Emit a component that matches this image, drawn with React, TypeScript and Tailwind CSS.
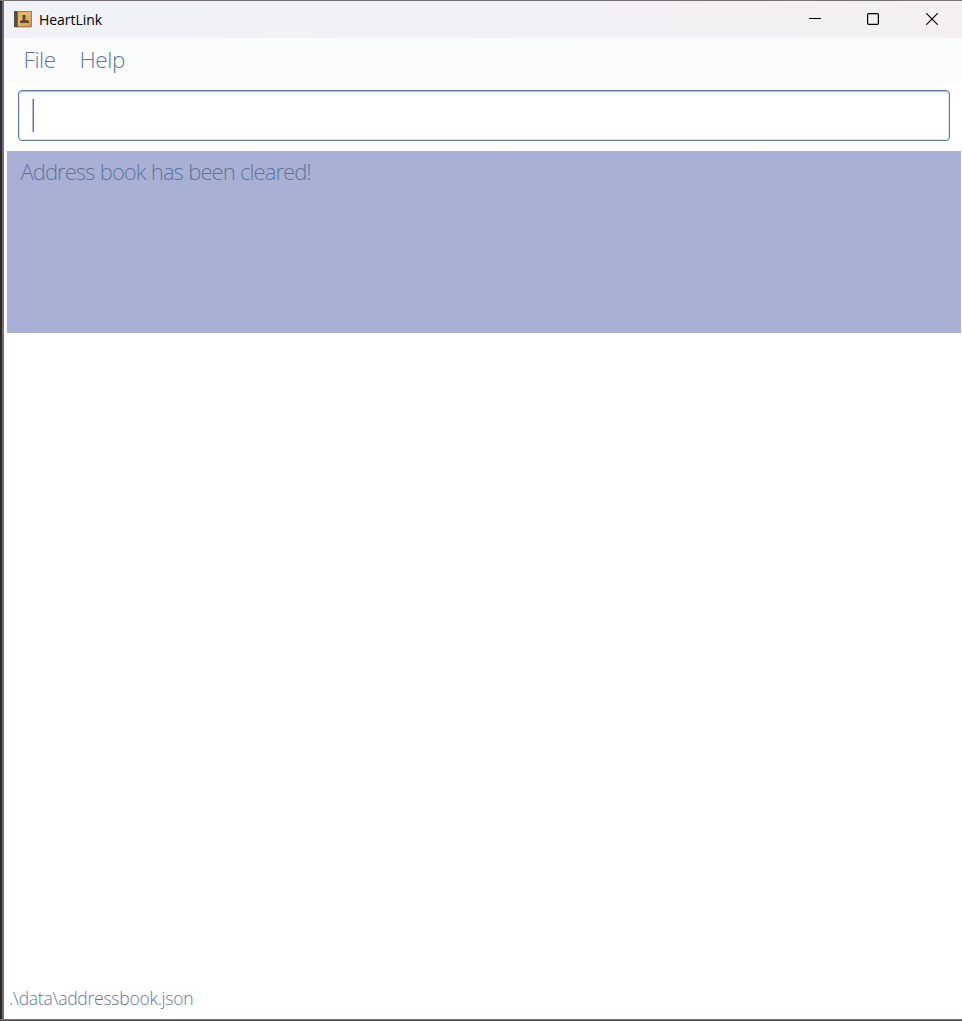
import React from "react";

function BookIcon() {
  return (
    <svg width="20" height="20" viewBox="0 0 20 20" className="shrink-0">
      <defs>
        <linearGradient id="cover" x1="0" y1="0" x2="1" y2="1">
          <stop offset="0" stopColor="#dba95a" />
          <stop offset=".4" stopColor="#e5b96e" />
          <stop offset="1" stopColor="#cf9a48" />
        </linearGradient>
      </defs>
      <rect x="2" y="17" width="16" height="1" fill="#c5c3c4" />
      <rect x="1" y="1" width="18" height="16" fill="#b07f3c" />
      <rect x="4" y="2" width="14" height="14" fill="url(#cover)" />
      <rect x="1" y="1" width="3" height="16" fill="#5a4b4b" />
      <rect x="4" y="1" width="1" height="16" fill="#8b632f" />
      <path d="M9.5 5h3v4h-.5v1h3v1h1v2H7v-2h1v-1h2V9h-.5z" fill="#5c4a2c" />
    </svg>
  );
}

function TitleBar() {
  return (
    <header className="flex h-[37px] shrink-0 items-center bg-linear-to-r from-[#f0f2f8] to-[#f4f0f2] pl-[9px]">
      <BookIcon />
      <h1 className="ml-[6px] font-['Open_Sans'] text-[14px] leading-[20px] font-normal tracking-[-0.05px] text-black">
        HeartLink
      </h1>
      <div className="ml-auto flex text-black">
        <button aria-label="Minimize" className="flex h-[37px] w-[58px] items-center justify-center pb-px">
          <svg width="12" height="12" viewBox="0 0 12 12" shapeRendering="crispEdges">
            <path d="M0 5.5h12" stroke="currentColor" />
          </svg>
        </button>
        <button aria-label="Maximize" className="flex h-[37px] w-[58px] items-center justify-center pb-px">
          <svg width="12" height="12" viewBox="0 0 12 12">
            <rect x=".6" y=".6" width="10.8" height="10.8" rx="1.2" fill="none" stroke="currentColor" strokeWidth="1.2" />
          </svg>
        </button>
        <button aria-label="Close" className="flex h-[37px] w-[60px] items-center justify-center pb-px">
          <svg width="12" height="12" viewBox="0 0 12 12">
            <path d="M.3.3l11.4 11.4M11.7.3L.3 11.7" stroke="currentColor" strokeWidth="1.15" />
          </svg>
        </button>
      </div>
    </header>
  );
}

export default function App() {
  return (
    <div className="flex h-[1021px] w-[962px] flex-col overflow-hidden bg-white font-['Open_Sans',sans-serif] font-light text-[#5f759d]">
      <div className="h-px shrink-0 bg-[#777275]" />
      <div className="flex min-h-0 flex-1">
        <div className="flex w-[2px] shrink-0 flex-col">
          <div className="h-[150px] bg-[#2c2a3c]" />
          <div className="flex-1 bg-[#2a2726]" />
        </div>
        <div className="w-[2px] shrink-0 bg-[#716f70]" />
        <main className="flex min-w-0 flex-1 flex-col">
          <TitleBar />
          <nav className="flex h-[46px] shrink-0 bg-[#fbfdfd] pl-[19.5px] text-[22.5px] leading-[44px]">
            <span className="w-[56px] tracking-[-0.4px]">File</span>
            <span className="tracking-[-0.4px]">Help</span>
          </nav>
          <div className="h-[67px] shrink-0 bg-linear-to-b from-white from-85% to-[#fbfcfc] pt-[6px] pr-[12px] pl-[14px]">
            <div className="flex h-[51px] rounded-[4px] border-[1.5px] border-[#62759d] bg-white pt-[8px] pl-[13px] shadow-[inset_0_1px_0_#bcc4d4,inset_0_5px_4px_-2px_#f0f2f3,inset_0_0_0_1px_#dfe3ea]">
              <div className="h-[33px] w-[2px] border-r border-[#5f7398] bg-[#b5bfd0]" />
            </div>
          </div>
          <section className="mr-px ml-[3px] h-[182px] shrink-0 bg-[#a9b0d6] pl-[13.5px] text-[22px] leading-[40px] tracking-[-0.95px] whitespace-nowrap [word-spacing:0.6px]">
            <span>Address book has been cleared!</span>
          </section>
          <div className="flex-1" />
          <footer className="h-[42px] shrink-0 pl-[5px] text-[17.5px] leading-[43px] tracking-[-0.25px] whitespace-nowrap">
            <span>.\data\addressbook.json</span>
          </footer>
        </main>
      </div>
      <div className="h-[2px] shrink-0 border-t border-[#77797a] bg-[#4b4445]" />
    </div>
  );
}
